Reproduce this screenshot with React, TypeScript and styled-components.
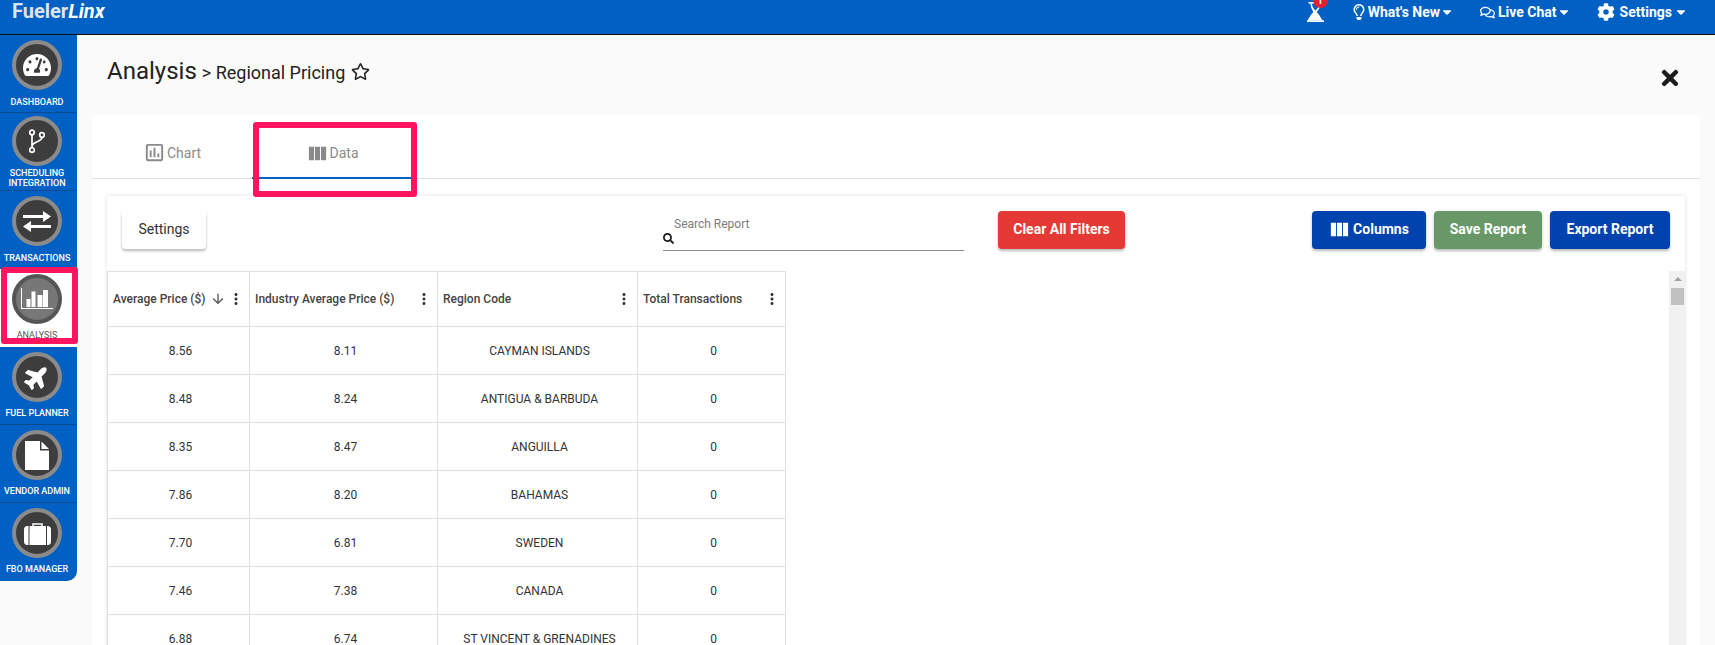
import React from "react";
import styled, { createGlobalStyle } from "styled-components";
import {
  FaTachometerAlt, FaPlane, FaRegLightbulb,
  FaRegComments, FaCog, FaCaretDown, FaTimes, FaRegStar, FaSearch,
} from "react-icons/fa";
import { MdOutlineAssessment, MdViewColumn, MdArrowDownward, MdMoreVert } from "react-icons/md";

const Global = createGlobalStyle`
  html, body { margin: 0; padding: 0; height: 645px; overflow: hidden; background: #fafafa; }
  body { font-family: Roboto, "Liberation Sans", sans-serif; }
  * { box-sizing: border-box; }
`;

const Page = styled.div`
  position: relative;
  height: 645px;
  overflow: hidden;
`;

const TopBar = styled.header`
  height: 35px;
  background: #0060c3;
  border-bottom: 1px solid #111;
  display: flex;
  align-items: flex-start;
  padding: 0 30px 0 12px;
  color: #fff;
  overflow: hidden;
`;

const Logo = styled.div`
  font-size: 20px;
  line-height: 22px;
  font-weight: 700;
  color: #dfe4ea;
  em { color: #fff; font-style: italic; }
`;

const TopActions = styled.nav`
  margin-left: auto;
  display: flex;
  align-items: center;
  height: 24px;
`;

const TopIcon = styled.span`
  position: relative;
  display: flex;
  margin-right: 29px;
`;

const Badge = styled.span`
  position: absolute;
  top: -9px;
  left: 6px;
  width: 15px;
  height: 15px;
  border-radius: 50%;
  background: #e3212f;
  font-size: 9px;
  line-height: 17px;
  text-align: center;
  font-weight: 700;
`;

const TopItem = styled.div<{ $gap: number; $mr: number; $iconSize: number; $trim?: number }>`
  display: flex;
  align-items: center;
  gap: ${(p) => p.$gap}px;
  margin-right: ${(p) => p.$mr}px;
  font-size: 14px;
  font-weight: 700;
  white-space: nowrap;
  svg:first-child {
    font-size: ${(p) => p.$iconSize}px;
    margin: 0 ${(p) => p.$trim ?? 0}px;
  }
`;

const Caret = styled(FaCaretDown)`
  font-size: 14px;
  margin: 0 -3px;
`;

const Body = styled.div`
  display: flex;
  align-items: flex-start;
`;

const Sidebar = styled.aside`
  width: 77px;
  flex: none;
  background: #0060c3;
  border-bottom-right-radius: 10px;
  overflow: hidden;
`;

const NavItem = styled.div<{ $active?: boolean; $top: number }>`
  height: 78px;
  padding: ${(p) => p.$top}px 3px 0 0;
  display: flex;
  flex-direction: column;
  align-items: center;
  background: ${(p) => (p.$active ? "#fff" : "transparent")};
  border-bottom: 1px solid ${(p) => (p.$active ? "transparent" : "#0b4a8f")};
  &:last-child { border-bottom: none; }
`;

const NavCircle = styled.div<{ $active?: boolean }>`
  width: 50px;
  height: 50px;
  flex: none;
  border-radius: 50%;
  border: 4px solid ${(p) => (p.$active ? "#555" : "#8b8b8b")};
  background: ${(p) => (p.$active ? "#777" : "#3d3d3d")};
  color: #fff;
  display: flex;
  align-items: center;
  justify-content: center;
`;

const NavLabel = styled.div<{ $active?: boolean; $nudge?: number }>`
  flex: 1;
  display: flex;
  align-items: center;
  text-align: center;
  padding-top: ${(p) => p.$nudge ?? 0}px;
  font-size: 9px;
  line-height: 10.5px;
  font-weight: ${(p) => (p.$active ? 400 : 500)};
  color: ${(p) => (p.$active ? "#555" : "#fff")};
  white-space: nowrap;
`;

const Main = styled.main`
  flex: 1;
  min-width: 0;
  padding: 0 15px;
`;

const TitleRow = styled.div`
  height: 79px;
  padding: 20px 18px 0 15px;
  display: flex;
  align-items: flex-start;
  color: #222;
`;

const PageTitle = styled.h1`
  margin: 0;
  font-size: 24px;
  line-height: 32px;
  font-weight: 400;
`;

const Crumb = styled.span`
  font-size: 18px;
  line-height: 32px;
  margin-left: 5px;
  padding-top: 2px;
`;

const Star = styled(FaRegStar)`
  font-size: 19px;
  margin: 7px 0 0 6px;
`;

const Close = styled(FaTimes)`
  margin: 11px 0 0 auto;
  font-size: 24px;
  color: #1c1c1c;
`;

const Card = styled.section`
  background: #fff;
  border-radius: 6px 6px 0 0;
  height: 540px;
`;

const Tabs = styled.div`
  height: 65px;
  display: flex;
  border-bottom: 1px solid #e0e0e0;
`;

const Tab = styled.div<{ $active?: boolean }>`
  width: 160px;
  display: flex;
  align-items: center;
  justify-content: center;
  gap: 1px;
  font-size: 14px;
  color: #8a8a8a;
  border-bottom: ${(p) => (p.$active ? "2px solid #0060c3" : "none")};
  height: ${(p) => (p.$active ? "65px" : "64px")};
  padding-top: ${(p) => (p.$active ? "15px" : "13px")};
  svg { font-size: 23px; }
`;

const Panel = styled.div`
  margin: 17px 15px 0;
  background: #fff;
  box-shadow: 0 0 4px rgba(0, 0, 0, 0.12);
  height: 460px;
`;

const Toolbar = styled.div`
  height: 75px;
  padding: 15px 15px 0;
  display: flex;
  align-items: flex-start;
`;

const Btn = styled.button<{ $bg: string; $w: number; $ml?: number }>`
  width: ${(p) => p.$w}px;
  height: 38px;
  margin-left: ${(p) => p.$ml ?? 0}px;
  flex: none;
  border: none;
  border-radius: 4px;
  background: ${(p) => p.$bg};
  color: ${(p) => (p.$bg === "#fff" ? "#333" : "#fff")};
  font-family: inherit;
  font-size: 14px;
  font-weight: ${(p) => (p.$bg === "#fff" ? 400 : 700)};
  display: flex;
  align-items: center;
  justify-content: center;
  gap: 2px;
  padding: 0 0 2px;
  box-shadow: 0 2px 3px rgba(0, 0, 0, 0.28);
  svg { font-size: 23px; margin-left: -1px; }
`;

const Search = styled.div`
  margin-left: 457px;
  width: 301px;
  height: 40px;
  flex: none;
  position: relative;
  border-bottom: 1px solid #8a8a8a;
`;

const SearchLabel = styled.span`
  position: absolute;
  left: 11px;
  top: 6px;
  font-size: 12px;
  line-height: 14px;
  color: #7d7d7d;
`;

const SearchIcon = styled(FaSearch)`
  position: absolute;
  left: 0;
  top: 22px;
  font-size: 11px;
  color: #1a1a1a;
`;

const RightActions = styled.div`
  margin-left: auto;
  display: flex;
  gap: 8px;
`;

const TableArea = styled.div`
  display: flex;
  justify-content: space-between;
`;

const Table = styled.table`
  border-collapse: collapse;
  table-layout: fixed;
  width: 678px;
  font-size: 12px;
  color: #333;
`;

const Th = styled.th<{ $w: number }>`
  width: ${(p) => p.$w}px;
  height: 55px;
  border: 1px solid #e0e0e0;
  font-weight: 500;
  text-align: left;
  padding: 0 5px;
  color: #444;
`;

const ThInner = styled.div`
  display: flex;
  align-items: center;
  white-space: nowrap;
`;

const SortIcon = styled(MdArrowDownward)`
  font-size: 16px;
  margin-left: 5px;
  color: #555;
  flex: none;
`;

const MenuIcon = styled(MdMoreVert)`
  font-size: 18px;
  margin: 0 -1px 0 auto;
  color: #333;
  flex: none;
`;

const Td = styled.td`
  height: 48px;
  border: 1px solid #e0e0e0;
  text-align: center;
  padding: 0 0 0 4px;
`;

const Scrollbar = styled.div`
  width: 17px;
  height: 380px;
  background: #f1f1f1;
  display: flex;
  flex-direction: column;
  align-items: center;
  padding-top: 6px;
  margin-right: -1px;
`;

const ScrollArrow = styled.div`
  width: 0;
  height: 0;
  border-left: 4px solid transparent;
  border-right: 4px solid transparent;
  border-bottom: 4px solid #a3a3a3;
  margin-bottom: 7px;
`;

const ScrollThumb = styled.div`
  width: 13px;
  height: 17px;
  background: #c1c1c1;
`;

const Annotation = styled.div<{ $l: number; $t: number; $w: number; $h: number }>`
  position: absolute;
  left: ${(p) => p.$l}px;
  top: ${(p) => p.$t}px;
  width: ${(p) => p.$w}px;
  height: ${(p) => p.$h}px;
  border: 6px solid #ff1460;
  border-radius: 3px;
  pointer-events: none;
`;

const HourglassIcon = () => (
  <svg width="17" height="20" viewBox="0 0 17 20" fill="#fff">
    <rect x="1.5" y="0" width="14" height="1.6" />
    <path d="M3.5 1.5h1.5c0 3 1.2 4.8 3.5 7 2.300-2.200 3.500-4 3.500-7h1.500c0 3.500-1.500 6-3.800 8.500 1 1.100 2 2.300 2.800 3.500l3 5h-15l3-5c.8-1.200 1.800-2.400 2.800-3.500C5 7.500 3.500 5 3.500 1.500z" />
    <rect x="0" y="18.300" width="17" height="1.700" />
  </svg>
);

const GitIcon = () => (
  <svg width="16" height="25" viewBox="0 0 16 25" fill="none" stroke="#fff" strokeWidth="1.700">
    <circle cx="3" cy="3.500" r="2.300" />
    <circle cx="13" cy="6" r="2.300" />
    <circle cx="3" cy="21" r="2.300" />
    <path d="M3 5.800V18.700M13 8.300C13 13 4 12.500 3 17" />
  </svg>
);

const SwapIcon = () => (
  <svg width="28" height="21" viewBox="0 0 28 21" fill="#fff">
    <path d="M0 4h20V0l8 5.500-8 5.500V7H0z" />
    <path d="M28 14H8v-4l-8 5.500L8 21v-4h20z" />
  </svg>
);

const AnalysisIcon = () => (
  <svg width="32" height="22" viewBox="0 0 32 22" fill="#fff">
    <path d="M0 0h1v20h31v1H0z" />
    <rect x="5.500" y="11" width="4" height="8" />
    <rect x="10.500" y="3.500" width="4" height="15.500" />
    <rect x="16.500" y="7" width="5" height="12" />
    <rect x="22" y="2" width="5" height="17" />
  </svg>
);

const FileIcon = () => (
  <svg width="24" height="29" viewBox="0 0 24 29" fill="#fff">
    <path d="M0 0h15v9.500h9V29H0z" />
    <path d="M16.500 0.500L24 8h-7.500z" />
  </svg>
);

const CaseIcon = () => (
  <svg width="27" height="23" viewBox="0 0 27 23">
    <path d="M9 5V2h9v3" fill="none" stroke="#fff" strokeWidth="1.500" />
    <rect x="0" y="4" width="27" height="19" rx="3.500" fill="#fff" />
    <rect x="4.500" y="4" width="1" height="19" fill="#3d3d3d" />
    <rect x="22" y="4" width="1" height="19" fill="#3d3d3d" />
  </svg>
);

const rows = [
  ["8.56", "8.11", "CAYMAN ISLANDS", "0"],
  ["8.48", "8.24", "ANTIGUA & BARBUDA", "0"],
  ["8.35", "8.47", "ANGUILLA", "0"],
  ["7.86", "8.20", "BAHAMAS", "0"],
  ["7.70", "6.81", "SWEDEN", "0"],
  ["7.46", "7.38", "CANADA", "0"],
  ["6.88", "6.74", "ST VINCENT & GRENADINES", "0"],
];

const nav: { label: React.ReactNode; icon: React.ReactNode; active?: boolean; top: number; nudge?: number }[] = [
  { label: "DASHBOARD", icon: <FaTachometerAlt size={28} />, top: 5, nudge: 2 },
  { label: <span>SCHEDULING<br />INTEGRATION</span>, icon: <GitIcon />, top: 3 },
  { label: "TRANSACTIONS", icon: <SwapIcon />, top: 5, nudge: 2 },
  { label: "ANALYSIS", icon: <AnalysisIcon />, active: true, top: 5 },
  { label: "FUEL PLANNER", icon: <FaPlane size={26} style={{ transform: "rotate(-45deg)" }} />, top: 5 },
  { label: "VENDOR ADMIN", icon: <FileIcon />, top: 5 },
  { label: "FBO MANAGER", icon: <CaseIcon />, top: 5 },
];

const headers = [
  { t: "Average Price ($)", w: 142, sort: true },
  { t: "Industry Average Price ($)", w: 188 },
  { t: "Region Code", w: 200 },
  { t: "Total Transactions", w: 148 },
];

export default function App() {
  return (
    <Page>
      <Global />
      <TopBar>
        <Logo>Fueler<em>Linx</em></Logo>
        <TopActions>
          <TopIcon>
            <HourglassIcon />
            <Badge>1</Badge>
          </TopIcon>
          <TopItem $gap={3} $mr={29} $iconSize={16} $trim={-2}>
            <FaRegLightbulb />What's New<Caret />
          </TopItem>
          <TopItem $gap={3} $mr={29} $iconSize={15}>
            <FaRegComments />Live Chat<Caret />
          </TopItem>
          <TopItem $gap={5} $mr={0} $iconSize={18}>
            <FaCog />Settings<Caret />
          </TopItem>
        </TopActions>
      </TopBar>
      <Body>
        <Sidebar>
          {nav.map((n, i) => (
            <NavItem key={i} $active={n.active} $top={n.top}>
              <NavCircle $active={n.active}>{n.icon}</NavCircle>
              <NavLabel $active={n.active} $nudge={n.nudge}>{n.label}</NavLabel>
            </NavItem>
          ))}
        </Sidebar>
        <Main>
          <TitleRow>
            <PageTitle>Analysis</PageTitle>
            <Crumb>&gt; Regional Pricing</Crumb>
            <Star />
            <Close />
          </TitleRow>
          <Card>
            <Tabs>
              <Tab><MdOutlineAssessment />Chart</Tab>
              <Tab $active><MdViewColumn />Data</Tab>
            </Tabs>
            <Panel>
              <Toolbar>
                <Btn $bg="#fff" $w={84}>Settings</Btn>
                <Search>
                  <SearchLabel>Search Report</SearchLabel>
                  <SearchIcon />
                </Search>
                <Btn $bg="#e53935" $w={127} $ml={34}>Clear All Filters</Btn>
                <RightActions>
                  <Btn $bg="#0043ae" $w={114}><MdViewColumn />Columns</Btn>
                  <Btn $bg="#689868" $w={108}>Save Report</Btn>
                  <Btn $bg="#0043ae" $w={120}>Export Report</Btn>
                </RightActions>
              </Toolbar>
              <TableArea>
                <Table>
                  <thead>
                    <tr>
                      {headers.map((h) => (
                        <Th key={h.t} $w={h.w}>
                          <ThInner>
                            {h.t}
                            {h.sort && <SortIcon />}
                            <MenuIcon />
                          </ThInner>
                        </Th>
                      ))}
                    </tr>
                  </thead>
                  <tbody>
                    {rows.map((r) => (
                      <tr key={r[2]}>
                        {r.map((c, i) => <Td key={i}>{c}</Td>)}
                      </tr>
                    ))}
                  </tbody>
                </Table>
                <Scrollbar>
                  <ScrollArrow />
                  <ScrollThumb />
                </Scrollbar>
              </TableArea>
            </Panel>
          </Card>
        </Main>
      </Body>
      <Annotation $l={1} $t={267} $w={77} $h={77} />
      <Annotation $l={253} $t={122} $w={164} $h={75} />
    </Page>
  );
}
